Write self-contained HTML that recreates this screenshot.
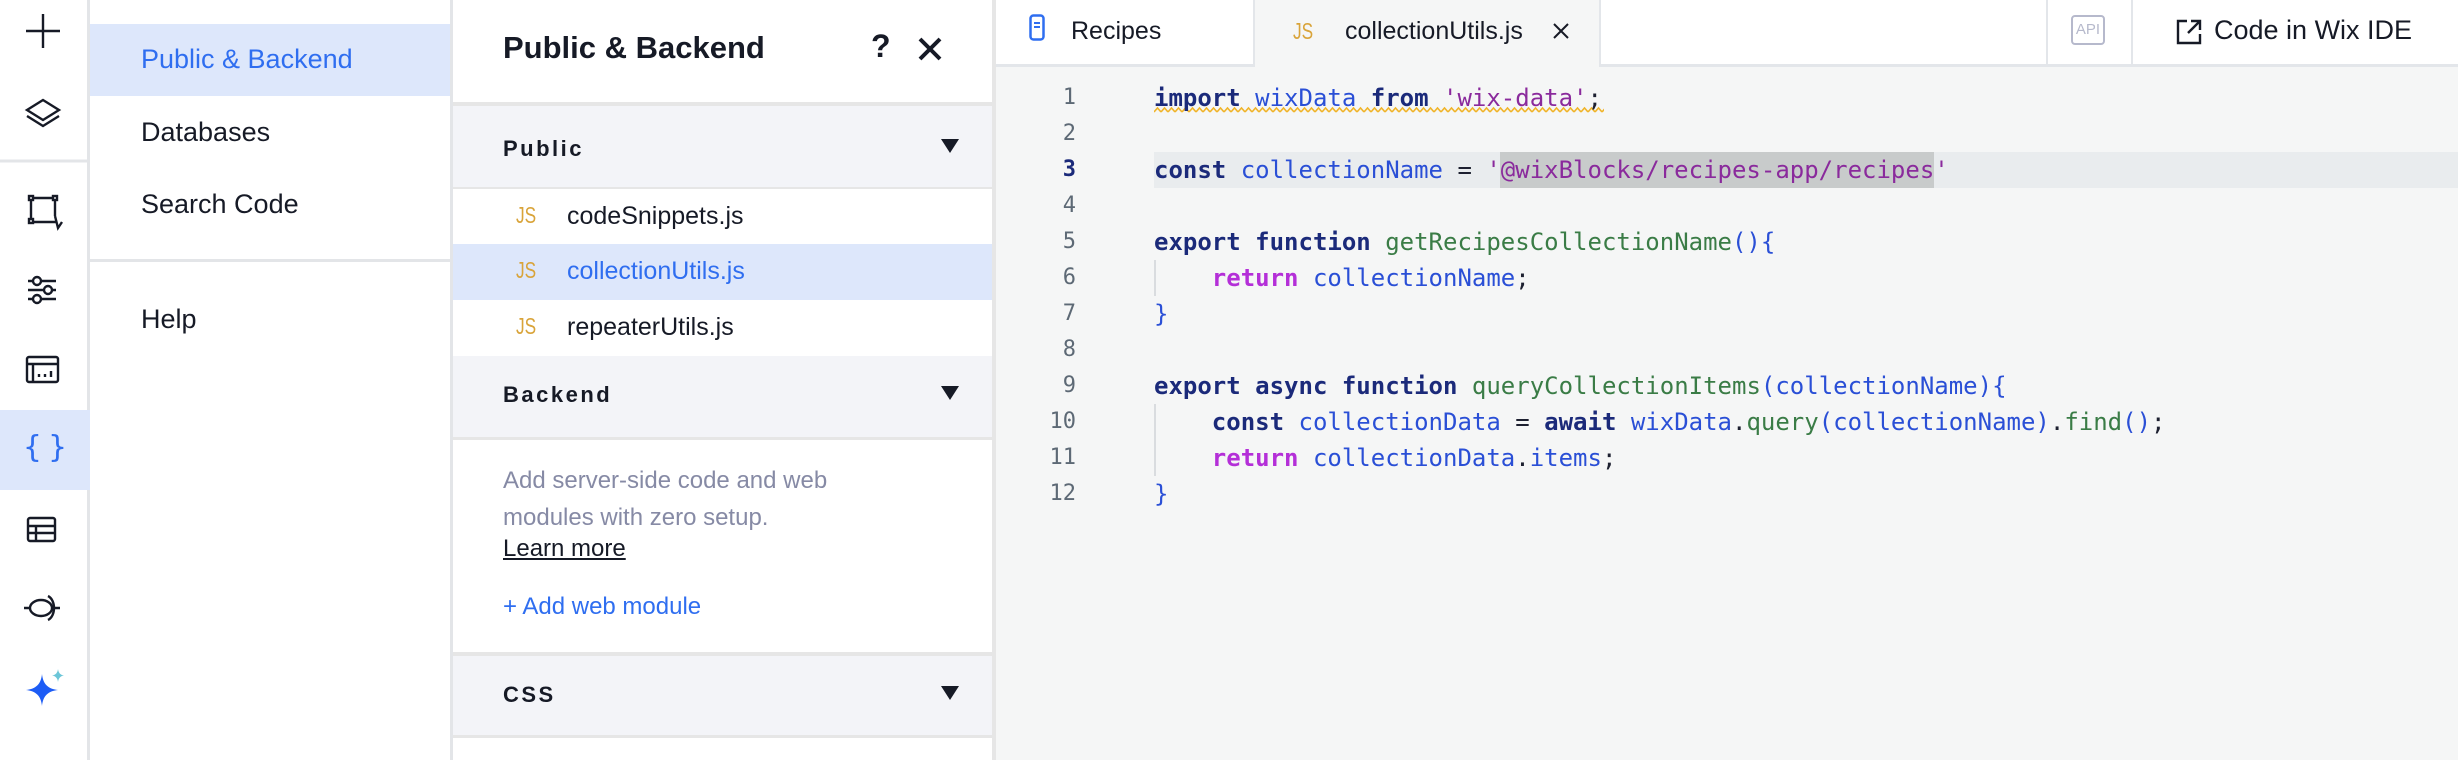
<!DOCTYPE html>
<html><head><meta charset="utf-8"><style>
*{margin:0;padding:0;box-sizing:border-box}
body{width:2458px;height:760px;overflow:hidden;background:#fff;font-family:"Liberation Sans",sans-serif;position:relative;color:#161a26}
.abs{position:absolute}
#bar{left:0;top:0;width:90px;height:760px;background:#fff;border-right:3px solid #e3e5e8}
#nav{left:90px;top:0;width:363px;height:760px;background:#fff;border-right:3px solid #e3e5e8}
#panel{left:453px;top:0;width:543px;height:760px;background:#fff;border-right:4px solid #e6e6e6}
#ed{left:996px;top:0;width:1462px;height:760px;background:#f5f6f6}
.navt{position:absolute;left:51px;font-size:27px;color:#161a26}
.sec{position:absolute;left:0;width:539px;background:#f3f4f8;border-top:4px solid #e6e6e6}
.sec span{position:absolute;left:50px;font-weight:bold;font-size:22px;letter-spacing:2.5px}
.tri{position:absolute;left:488px;width:0;height:0;border-left:9px solid transparent;border-right:9px solid transparent;border-top:14px solid #161a26}
.row{position:absolute;left:0;width:539px;height:56px}
.row .js{position:absolute;left:63px;top:13px;font-size:23px;color:#d9a43a;transform:scaleX(.75);transform-origin:left}
.row .n{position:absolute;left:114px;top:13px;font-size:25px}
.code{position:absolute;left:158px;font-family:"DejaVu Sans Mono","Liberation Mono",monospace;font-size:24px;white-space:pre;height:36px;line-height:36px;color:#2a4fd6}
.ln{position:absolute;width:80px;text-align:right;left:0;font-family:"DejaVu Sans Mono",monospace;font-size:22px;color:#5d6975;line-height:36px}
.k{color:#1b2a7a;font-weight:bold}.s{color:#8a2a9c}.f{color:#3a7c46}.r{color:#b42fd8;font-weight:bold}.p{color:#1d2030}
.guide{position:absolute;left:158px;width:2px;background:#d9dcdf}
</style></head><body>
<div id="bar" class="abs">
 <svg class="abs" style="left:0;top:0" width="90" height="760" fill="none" stroke="#161a26" stroke-width="2.4">
  <path d="M43 14v34M26 31h34"/>
  <path d="M43 100l-16 10 16 10 16-10z M27 116l16 10 16-10"/>
  <line x1="0" y1="161" x2="90" y2="161" stroke="#e3e5e8" stroke-width="3"/>
  <path d="M31 198v24h26M31 198h24v18M55 216l3 12 4-6" /><rect x="29" y="196" width="4" height="4" fill="#fff"/><rect x="53" y="196" width="4" height="4" fill="#fff"/><rect x="29" y="219" width="4" height="4" fill="#fff"/>
  <path d="M28 281h28M28 290h28M28 299h28"/><circle cx="37" cy="281" r="4" fill="#fff"/><circle cx="48" cy="290" r="4" fill="#fff"/><circle cx="37" cy="299" r="4" fill="#fff"/>
  <rect x="27" y="357" width="31" height="25" rx="2"/><path d="M27 364h31M33 364v18M39 374v3M45 374v3M51 371v6"/>
 </svg>
 <div class="abs" style="left:0;top:410px;width:90px;height:80px;background:#dde7fb"></div>
 <div class="abs" style="left:0;top:430px;width:90px;text-align:center;font-size:30px;color:#2f6ef0;font-family:'DejaVu Sans',sans-serif">{&#8201;}</div>
 <svg class="abs" style="left:0;top:500px" width="90" height="220" fill="none" stroke="#161a26" stroke-width="2.4">
  <rect x="28" y="18" width="27" height="23" rx="2"/><path d="M28 26h27M28 33h27M36 26v15"/>
  <ellipse cx="41" cy="108" rx="11" ry="8"/><path d="M24 108h6M52 108h8M48 96c8 4 8 20 0 24"/>
 </svg>
 <svg class="abs" style="left:20px;top:668px" width="50" height="40"><path d="M22 6c1 10 6 15 16 16-10 1-15 6-16 16-1-10-6-15-16-16 10-1 15-6 16-16z" fill="#1d5cf5"/><path d="M38 1c.5 4 2.5 6 6 6.5-3.5.5-5.5 2.5-6 6.5-.5-4-2.5-6-6-6.5 3.5-.5 5.5-2.5 6-6.5z" fill="#6cc6d8"/></svg>
</div>
<div id="nav" class="abs">
 <div class="abs" style="left:0;top:24px;width:360px;height:72px;background:#dde7fb"></div>
 <div class="navt" style="top:44px;color:#2f6ef0">Public &amp; Backend</div>
 <div class="navt" style="top:117px">Databases</div>
 <div class="navt" style="top:189px">Search Code</div>
 <div class="abs" style="left:0;top:259px;width:360px;height:3px;background:#e3e5e8"></div>
 <div class="navt" style="top:304px">Help</div>
</div>
<div id="panel" class="abs">
 <div class="abs" style="left:50px;top:30px;font-size:31px;font-weight:bold">Public &amp; Backend</div>
 <div class="abs" style="left:418px;top:28px;font-size:32px;font-weight:bold">?</div>
 <svg class="abs" style="left:464px;top:36px" width="26" height="26"><path d="M3 3l20 20M23 3L3 23" stroke="#161a26" stroke-width="4"/></svg>
 <div class="sec" style="top:102px;height:85px"><span style="top:30px">Public</span><div class="tri" style="top:33px"></div></div>
 <div class="row" style="top:187px;border-top:2px solid #e6e6e6"><div class="js">JS</div><div class="n">codeSnippets.js</div></div>
 <div class="row" style="top:244px;background:#dde7fb"><div class="js">JS</div><div class="n" style="color:#2f6ef0">collectionUtils.js</div></div>
 <div class="row" style="top:300px"><div class="js">JS</div><div class="n">repeaterUtils.js</div></div>
 <div class="sec" style="top:356px;height:81px;border-top:none"><span style="top:26px">Backend</span><div class="tri" style="top:30px"></div></div>
 <div class="abs" style="left:0;top:437px;width:539px;height:3px;background:#e6e6e6"></div>
 <div class="abs" style="left:50px;top:462px;font-size:24px;line-height:37px;color:#868aa5">Add server-side code and web<br>modules with zero setup.</div>
 <div class="abs" style="left:50px;top:535px;font-size:24px;color:#161a26;text-decoration:underline">Learn more</div>
 <div class="abs" style="left:50px;top:593px;font-size:24px;color:#2f6ef0">+ Add web module</div>
 <div class="sec" style="top:652px;height:85px"><span style="top:26px">CSS</span><div class="tri" style="top:30px"></div></div>
 <div class="abs" style="left:0;top:735px;width:539px;height:3px;background:#e6e6e6"></div>
</div>
<div id="ed" class="abs">
 <div class="abs" style="left:0;top:0;width:1462px;height:67px;background:#fff;border-bottom:3px solid #e3e6ea"></div>
 <div class="abs" style="left:257px;top:0;width:348px;height:67px;background:#f5f6f6;border-left:2px solid #e3e6ea;border-right:2px solid #e3e6ea"></div>
 <svg class="abs" style="left:33px;top:14px" width="16" height="28"><rect x="1.5" y="1.5" width="13" height="24" rx="3" fill="none" stroke="#2f6ef0" stroke-width="2.5"/><path d="M5 9h6M5 13h6" stroke="#2f6ef0" stroke-width="2"/></svg>
 <div class="abs" style="left:75px;top:17px;font-size:25px;color:#161a26">Recipes</div>
 <div class="abs" style="left:297px;top:18px;font-size:23px;color:#d9a43a;transform:scaleX(.75);transform-origin:left">JS</div>
 <div class="abs" style="left:349px;top:17px;font-size:25px;color:#161a26">collectionUtils.js</div>
 <svg class="abs" style="left:556px;top:22px" width="18" height="18"><path d="M2 2l14 14M16 2L2 16" stroke="#161a26" stroke-width="2"/></svg>
 <div class="abs" style="left:1050px;top:0;width:2px;height:66px;background:#e3e6ea"></div>
 <div class="abs" style="left:1135px;top:0;width:2px;height:66px;background:#e3e6ea"></div>
 <div class="abs" style="left:1075px;top:15px;width:34px;height:30px;border:2px solid #b6b9cc;border-radius:4px;font-size:15px;color:#b6b9cc;text-align:center;line-height:26px">API</div>
 <svg class="abs" style="left:1179px;top:18px" width="28" height="28" fill="none" stroke="#161a26" stroke-width="2.4"><path d="M12 3H3v22h22v-9M16 3h9v9M25 3L13 15"/></svg>
 <div class="abs" style="left:1218px;top:15px;font-size:27px;color:#161a26">Code in Wix IDE</div>
 <div class="abs" style="left:158px;top:152px;width:1304px;height:36px;background:#e9ecee"></div>
 <div class="abs" style="left:504px;top:152px;width:434px;height:36px;background:#c8cbcb"></div>
 <div class="guide" style="top:260px;height:36px"></div>
 <div class="guide" style="top:404px;height:72px"></div>
 <svg class="abs" style="left:158px;top:106px" width="450" height="8"><defs><pattern id="sq" width="7" height="8" patternUnits="userSpaceOnUse"><path d="M0 6L3.5 2 7 6" fill="none" stroke="#f0b429" stroke-width="1.6"/></pattern></defs><rect width="450" height="8" fill="url(#sq)"/></svg>
 <div class="ln" style="top:80px">1</div><div class="ln" style="top:116px">2</div><div class="ln" style="top:152px;color:#1b2a7a;font-weight:bold">3</div><div class="ln" style="top:188px">4</div><div class="ln" style="top:224px">5</div><div class="ln" style="top:260px">6</div><div class="ln" style="top:296px">7</div><div class="ln" style="top:332px">8</div><div class="ln" style="top:368px">9</div><div class="ln" style="top:404px">10</div><div class="ln" style="top:440px">11</div><div class="ln" style="top:476px">12</div>
 <div class="code" style="top:80px"><span class="k">import</span> wixData <span class="k">from</span> <span class="s">'wix-data'</span><span class="p">;</span></div>
 <div class="code" style="top:152px"><span class="k">const</span> collectionName <span class="p">=</span> <span class="s">'@wixBlocks/recipes-app/recipes'</span></div>
 <div class="code" style="top:224px"><span class="k">export</span> <span class="k">function</span> <span class="f">getRecipesCollectionName</span>(){</div>
 <div class="code" style="top:260px">    <span class="r">return</span> collectionName<span class="p">;</span></div>
 <div class="code" style="top:296px">}</div>
 <div class="code" style="top:368px"><span class="k">export</span> <span class="k">async</span> <span class="k">function</span> <span class="f">queryCollectionItems</span>(collectionName){</div>
 <div class="code" style="top:404px">    <span class="k">const</span> collectionData <span class="p">=</span> <span class="k">await</span> wixData<span class="p">.</span><span class="f">query</span>(collectionName)<span class="p">.</span><span class="f">find</span>()<span class="p">;</span></div>
 <div class="code" style="top:440px">    <span class="r">return</span> collectionData<span class="p">.</span>items<span class="p">;</span></div>
 <div class="code" style="top:476px">}</div>
</div>
</body></html>
